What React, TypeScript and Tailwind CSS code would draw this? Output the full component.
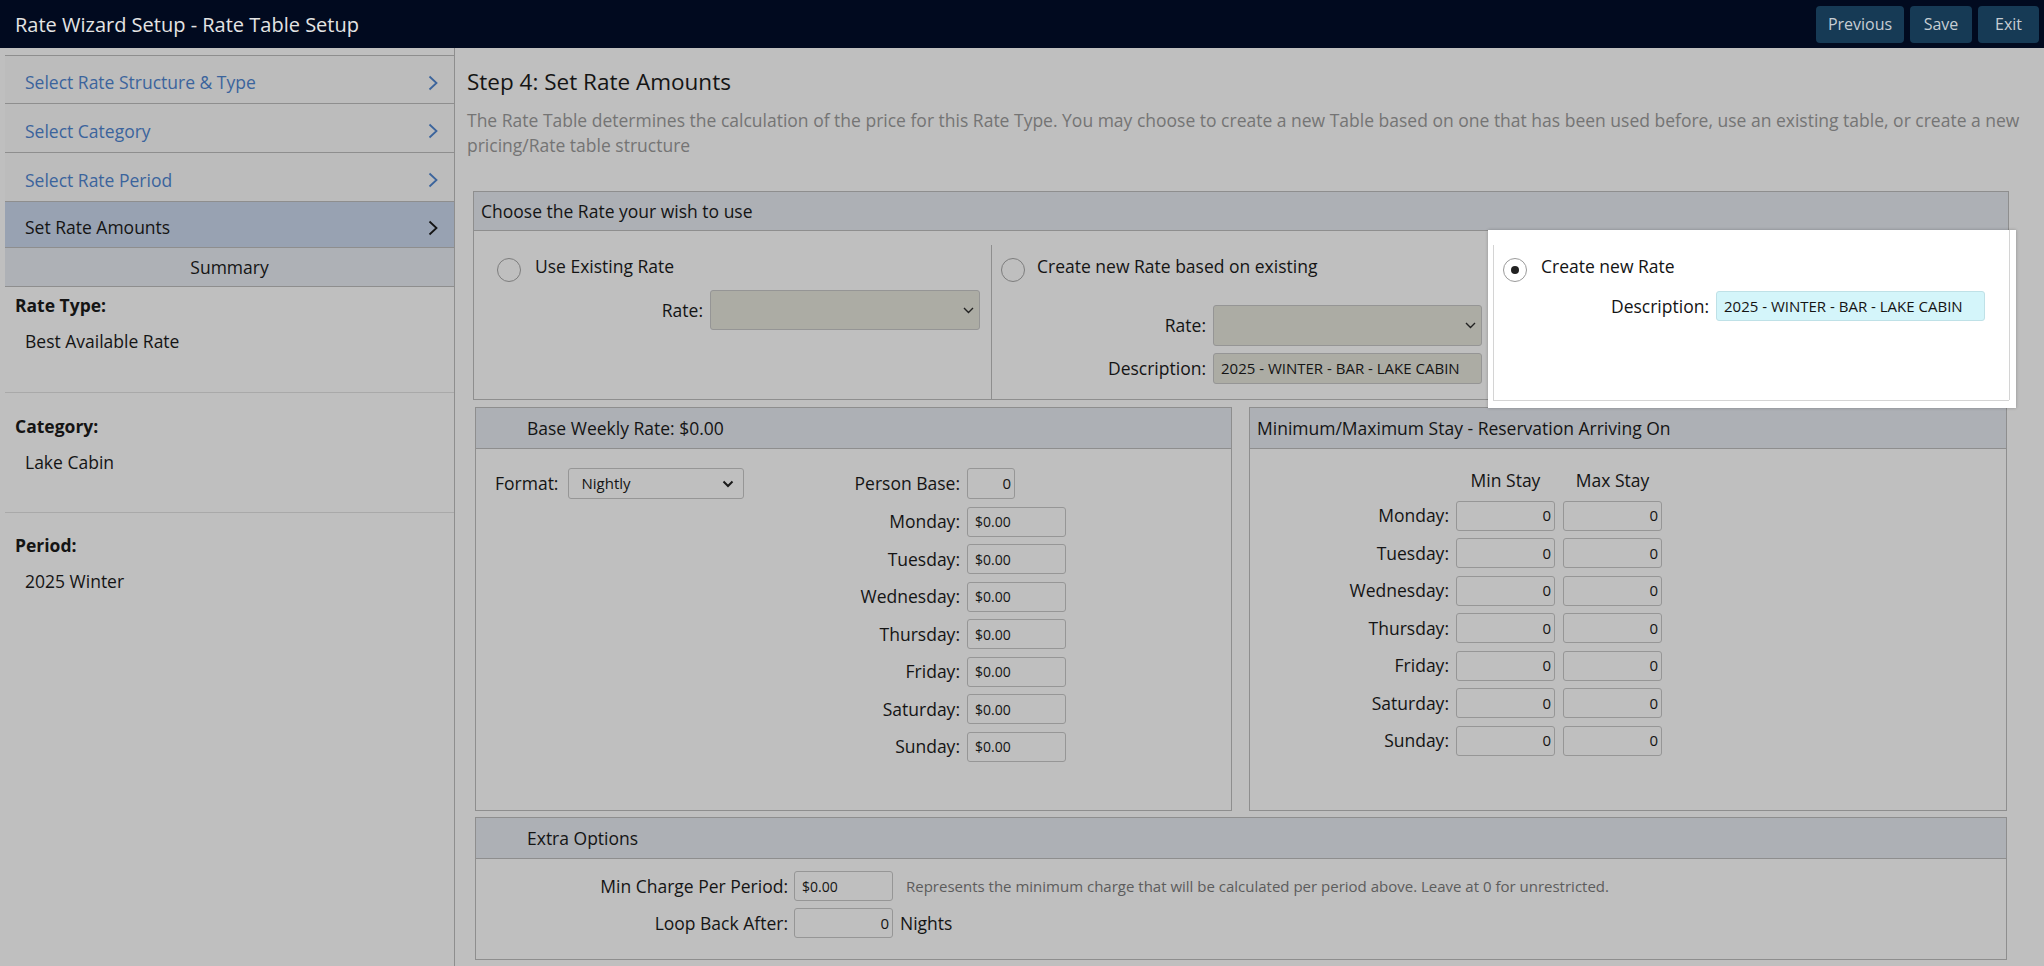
import React from "react";

const navItems = [
    { label: "Select Rate Structure & Type", h: "h-[48px]", active: false },
    { label: "Select Category", h: "h-[49px]", active: false },
    { label: "Select Rate Period", h: "h-[49px]", active: false },
    { label: "Set Rate Amounts", h: "h-[46px]", active: true },
];

const summary = [
    { label: "Rate Type:", value: "Best Available Rate", pt: "pt-[5px]" },
    { label: "Category:", value: "Lake Cabin", pt: "pt-[20px]" },
    { label: "Period:", value: "2025 Winter", pt: "pt-[19px]" },
];

const days = [ "Monday", "Tuesday", "Wednesday", "Thursday", "Friday", "Saturday", "Sunday" ];

const ChevronRight = () => (
    <svg width="10" height="16" viewBox="0 0 10 16" fill="none">
        <path d="M1.5 1.5 L8.5 8 L1.5 14.5" stroke="currentColor" strokeWidth="1.8" />
    </svg>
);

const ThinChevron = () => (
    <svg width="11" height="7" viewBox="0 0 11 7" fill="none">
        <path d="M1 1 L5.5 5.5 L10 1" stroke="#222" strokeWidth="1.4" />
    </svg>
);

const Radio = ( { checked }: { checked?: boolean } ) => (
    <span
        className={ `w-[24px] h-[24px] shrink-0 rounded-full border flex items-center justify-center ${ checked ? "bg-white border-[#9a9a9a]" : "border-[#7d7d7d]" }` }
    >
        { checked && <span className="w-[8px] h-[8px] rounded-full bg-[#222]" /> }
    </span>
);

const PanelHeader = ( { title, indent }: { title: string; indent?: boolean } ) => (
    <div
        className={ `h-[41px] flex items-center border-b border-[#8e8e8e] bg-[#adb0b5] ${ indent ? "pl-[51px]" : "pl-[7px]" }` }
    >
        { title }
    </div>
);

const Field = ( { value, w, right }: { value: string; w: string; right?: boolean } ) => (
    <div
        className={ `${ w } h-[30px] flex items-center rounded-[3px] border border-[#969696] text-[14px] ${ right ? "justify-end pr-[3px] text-[15px]" : "pl-[7px]" }` }
    >
        { value }
    </div>
);

export default function App ()
{
    return (
        <div className="w-[2044px] h-[966px] overflow-hidden bg-[#bfbfbf] text-[#141414] font-['Open_Sans','Noto_Sans',sans-serif] text-[17.5px] leading-[25px]">
            <header className="h-[48px] bg-[#010a1f] flex items-center justify-between pl-[15px] pr-[5px]">
                <h1 className="text-[20px] text-[#e4e4e4]">Rate Wizard Setup - Rate Table Setup</h1>
                <div className="flex gap-[6px]">
                    <button className="h-[37px] w-[88px] rounded-[4px] bg-[#163a55] text-[16px] text-[#c6cdd3]">Previous</button>
                    <button className="h-[37px] w-[62px] rounded-[4px] bg-[#163a55] text-[16px] text-[#c6cdd3]">Save</button>
                    <button className="h-[37px] w-[61px] rounded-[4px] bg-[#163a55] text-[16px] text-[#c6cdd3]">Exit</button>
                </div>
            </header>

            <div className="flex h-[918px]">
                {/* sidebar */ }
                <aside className="w-[455px] shrink-0 pl-[5px] pt-[7px] border-r border-[#8e8e8e]">
                    <div className="border-t border-[#8e8e8e]">
                        { navItems.map( ( item ) => (
                            <div
                                key={ item.label }
                                className={ `${ item.h } flex items-center justify-between pt-[6px] pl-[20px] pr-[16px] border-b border-[#8e8e8e] ${ item.active ? "bg-[#98a2b2] text-[#141414]" : "bg-[#bcbcbc] text-[#3b649c]" }` }
                            >
                                <span>{ item.label }</span>
                                <ChevronRight />
                            </div>
                        ) ) }
                        <div className="h-[39px] flex items-center justify-center bg-[#aeb1b6] border-b border-[#8e8e8e]">
                            Summary
                        </div>
                    </div>
                    { summary.map( ( s, i ) => (
                        <div
                            key={ s.label }
                            className={ `${ s.pt } ${ i < 2 ? "border-b border-[#a9a9a9]" : "" } ${ i === 0 ? "h-[106px]" : "" } ${ i === 1 ? "h-[120px]" : "" }` }
                        >
                            <div className="pl-[10px] font-bold leading-[27px]">{ s.label }</div>
                            <div className="pl-[20px] mt-[9px] leading-[27px]">{ s.value }</div>
                        </div>
                    ) ) }
                </aside>

                {/* main */ }
                <main className="flex-1 pl-[12px] pt-[19px]">
                    <h2 className="text-[22.5px] leading-[30px]">Step 4: Set Rate Amounts</h2>
                    <p className="mt-[11px] w-[1575px] text-[#747474]">
                        The Rate Table determines the calculation of the price for this Rate Type. You may choose to create a new Table based on one that has been used before, use an existing table, or create a new
                        <br />
                        pricing/Rate table structure
                    </p>

                    <div className="mt-[33px] ml-[6px] w-[1536px]">
                        {/* choose rate */ }
                        <div className="relative border border-[#8e8e8e]">
                            <div className="h-[39px] flex items-center pl-[7px] border-b border-[#8e8e8e] bg-[#adb0b5]">
                                Choose the Rate your wish to use
                            </div>

                            {/* spotlight around the selected option */ }
                            <div className="absolute left-[1014px] top-[38px] w-[528px] h-[178px] bg-white shadow-[0_0_3px_rgba(0,0,0,0.25)]">
                                <div className="absolute left-[5px] top-[15px] h-[155px] border-l border-[#d4d4d4]" />
                                <div className="absolute left-[5px] top-[170px] w-[516px] border-t border-[#d4d4d4]" />
                                <div className="absolute left-[521px] top-0 h-[170px] border-l border-[#d4d4d4]" />
                            </div>

                            <div className="flex pt-[14px]">
                                <div className="w-[518px] h-[154px] border-r border-[#8e8e8e] pl-[23px] pt-[13px]">
                                    <div className="h-[25px] flex items-start gap-[14px]">
                                        <Radio />
                                        <span className="-mt-[4px]">Use Existing Rate</span>
                                    </div>
                                    <div className="mt-[7px] flex items-center justify-end gap-[7px] pr-[11px]">
                                        <span>Rate:</span>
                                        <div className="w-[270px] h-[40px] rounded-[3px] border border-[#959595] bg-[#acaca4] flex items-center justify-end pr-[5px]">
                                            <ThinChevron />
                                        </div>
                                    </div>
                                </div>

                                <div className="w-[502px] h-[154px] border-r border-[#8e8e8e] pl-[9px] pt-[13px]">
                                    <div className="h-[25px] flex items-start gap-[12px]">
                                        <Radio />
                                        <span className="-mt-[4px]">Create new Rate based on existing</span>
                                    </div>
                                    <div className="mt-[22px] flex items-center justify-end gap-[7px] pr-[11px]">
                                        <span>Rate:</span>
                                        <div className="w-[269px] h-[41px] rounded-[3px] border border-[#959595] bg-[#acaca4] flex items-center justify-end pr-[5px]">
                                            <ThinChevron />
                                        </div>
                                    </div>
                                    <div className="mt-[7px] flex items-center justify-end gap-[7px] pr-[11px]">
                                        <span>Description:</span>
                                        <div className="w-[269px] h-[31px] rounded-[3px] border border-[#959595] bg-[#acaca4] flex items-center pl-[7px] text-[15px]">
                                            2025 - WINTER - BAR - LAKE CABIN
                                        </div>
                                    </div>
                                </div>

                                <div className="relative z-10 flex-1 h-[154px] pl-[9px] pt-[13px]">
                                    <div className="h-[25px] flex items-start gap-[14px]">
                                        <Radio checked />
                                        <span className="-mt-[4px]">Create new Rate</span>
                                    </div>
                                    <div className="mt-[8px] flex items-center justify-end gap-[7px] pr-[23px]">
                                        <span>Description:</span>
                                        <div className="w-[269px] h-[30px] rounded-[3px] border border-[#bfe1e7] bg-[#d4f5fa] flex items-center pl-[7px] text-[15px]">
                                            2025 - WINTER - BAR - LAKE CABIN
                                        </div>
                                    </div>
                                </div>
                            </div>
                        </div>

                        {/* rates + stays */ }
                        <div className="mt-[7px] mx-[2px] flex gap-[17px]">
                            <div className="w-[757px] h-[404px] border border-[#8e8e8e]">
                                <PanelHeader title="Base Weekly Rate: $0.00" indent />
                                <div className="flex pl-[19px] pt-[19px]">
                                    <div className="w-[300px] h-[31px] flex items-center gap-[10px]">
                                        <span>Format:</span>
                                        <div className="w-[176px] h-[31px] rounded-[3px] border border-[#969696] flex items-center justify-between pl-[12px] pr-[9px] text-[15px]">
                                            <span>Nightly</span>
                                            <svg width="12" height="8" viewBox="0 0 12 8" fill="none">
                                                <path d="M1.5 1.5 L6 6 L10.5 1.5" stroke="#1a1a1a" strokeWidth="2" />
                                            </svg>
                                        </div>
                                    </div>
                                    <div className="grid grid-cols-[165px_auto] gap-x-[7px] gap-y-[7.5px] items-center">
                                        <span className="text-right">Person Base:</span>
                                        <div className="w-[48px] h-[31px] flex items-center justify-end pr-[3px] rounded-[3px] border border-[#969696] text-[15px]">0</div>
                                        { days.map( ( d ) => (
                                            <React.Fragment key={ d }>
                                                <span className="text-right">{ d }:</span>
                                                <Field value="$0.00" w="w-[99px]" />
                                            </React.Fragment>
                                        ) ) }
                                    </div>
                                </div>
                            </div>

                            <div className="flex-1 h-[404px] border border-[#8e8e8e]">
                                <PanelHeader title="Minimum/Maximum Stay - Reservation Arriving On" />
                                <div className="pt-[19px] grid grid-cols-[199px_100px_99px] gap-x-[7px] gap-y-[7.5px] items-center">
                                    <span />
                                    <span className="w-[99px] h-[25px] text-center">Min Stay</span>
                                    <span className="h-[25px] text-center">Max Stay</span>
                                    { days.map( ( d ) => (
                                        <React.Fragment key={ d }>
                                            <span className="text-right">{ d }:</span>
                                            <Field value="0" w="w-[99px]" right />
                                            <Field value="0" w="w-[99px]" right />
                                        </React.Fragment>
                                    ) ) }
                                </div>
                            </div>
                        </div>

                        {/* extra options */ }
                        <div className="mt-[6px] mx-[2px] border border-[#8e8e8e]">
                            <PanelHeader title="Extra Options" indent />
                            <div className="pt-[12px] pb-[21px] grid grid-cols-[312px_auto] gap-x-[6px] gap-y-[7px] items-center">
                                <span className="text-right">Min Charge Per Period:</span>
                                <div className="flex items-center">
                                    <Field value="$0.00" w="w-[99px]" />
                                    <span className="ml-[13px] text-[15px] text-[#5c5c5c]">
                                        Represents the minimum charge that will be calculated per period above. Leave at 0 for unrestricted.
                                    </span>
                                </div>
                                <span className="text-right">Loop Back After:</span>
                                <div className="flex items-center">
                                    <Field value="0" w="w-[99px]" right />
                                    <span className="ml-[7px]">Nights</span>
                                </div>
                            </div>
                        </div>
                    </div>
                </main>
            </div>
        </div>
    );
}
